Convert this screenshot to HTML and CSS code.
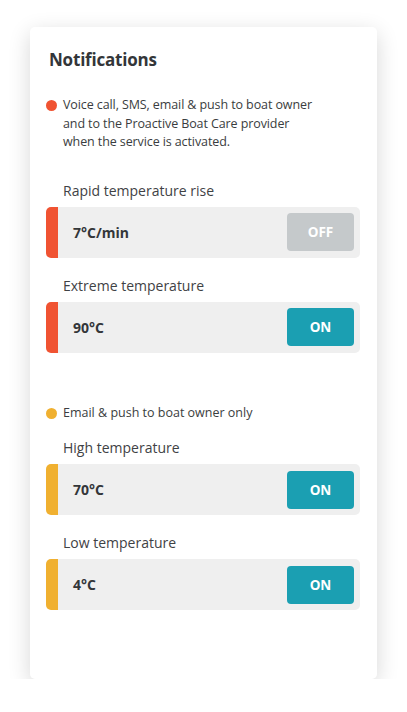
FILE: index.html
```html
<!DOCTYPE html>
<html>
<head>
<meta charset="utf-8">
<link rel="stylesheet" href="styles.css">
</head>
<body>
<div class="card">
  <h1 class="title">Notifications</h1>

  <div class="legend">
    <span class="dot dot-red"></span>
    <p class="legend-text">Voice call, SMS, email &amp; push to boat owner and to the Proactive Boat Care provider when the service is activated.</p>
  </div>

  <div class="item">
    <div class="label">Rapid temperature rise</div>
    <div class="row row-red">
      <span class="value">7°C/min</span>
      <span class="toggle toggle-off">OFF</span>
    </div>
  </div>

  <div class="item">
    <div class="label">Extreme temperature</div>
    <div class="row row-red">
      <span class="value">90°C</span>
      <span class="toggle toggle-on">ON</span>
    </div>
  </div>

  <div class="legend legend-small">
    <span class="dot dot-orange"></span>
    <p class="legend-text">Email &amp; push to boat owner only</p>
  </div>

  <div class="item">
    <div class="label">High temperature</div>
    <div class="row row-orange">
      <span class="value">70°C</span>
      <span class="toggle toggle-on">ON</span>
    </div>
  </div>

  <div class="item">
    <div class="label">Low temperature</div>
    <div class="row row-orange">
      <span class="value">4°C</span>
      <span class="toggle toggle-on">ON</span>
    </div>
  </div>
</div>
</body>
</html>
```
FILE: styles.css
```css
* { box-sizing: border-box; }
html, body { margin: 0; padding: 0; background: #fff; }
body {
  font-family: "Open Sans", "Noto Sans", sans-serif;
  color: #3a3d40;
}
.card {
  margin: 27px 0 0 30px;
  width: 347px;
  height: 652px;
  background: #fff;
  border-radius: 5px;
  box-shadow: 0 6px 22px rgba(0, 0, 0, 0.16);
  padding: 20px 17px 0 16px;
}
.title {
  margin: 0 0 0 3px;
  font-size: 17px;
  font-weight: 700;
  line-height: 26px;
  color: #333639;
  letter-spacing: -0.2px;
}
.legend {
  display: flex;
  align-items: flex-start;
  margin-top: 23px;
  margin-bottom: 29px;
}
.dot {
  flex: none;
  width: 11px;
  height: 11px;
  border-radius: 50%;
  margin-top: 4px;
  margin-right: 6px;
}
.dot-red { background: #f05332; }
.dot-orange { background: #f0b030; }
.legend-text {
  margin: 0;
  font-size: 12.5px;
  line-height: 18.5px;
  width: 255px;
  letter-spacing: -0.1px;
  color: #3a3d40;
}
.legend-small { margin-top: 51px; margin-bottom: 16px; }
.legend-small .legend-text { width: auto; letter-spacing: 0; }
.item { margin-bottom: 18px; }
.label {
  margin-left: 17px;
  font-size: 14px;
  line-height: 20px;
  color: #3f4245;
  margin-bottom: 6px;
}
.row {
  display: flex;
  align-items: center;
  justify-content: space-between;
  height: 51px;
  background: #efefef;
  border-radius: 5px;
  border-left: 12px solid;
  padding: 0 6px 0 15px;
}
.row-red { border-left-color: #f05332; }
.row-orange { border-left-color: #f0b030; }
.value {
  font-size: 14px;
  font-weight: 700;
  color: #333639;
}
.toggle {
  width: 67px;
  height: 38px;
  border-radius: 4px;
  display: flex;
  align-items: center;
  justify-content: center;
  color: #fff;
  font-size: 13.5px;
  font-weight: 700;
}
.toggle-off { background: #c5c9cb; }
.toggle-on { background: #1b9fb2; }
```
